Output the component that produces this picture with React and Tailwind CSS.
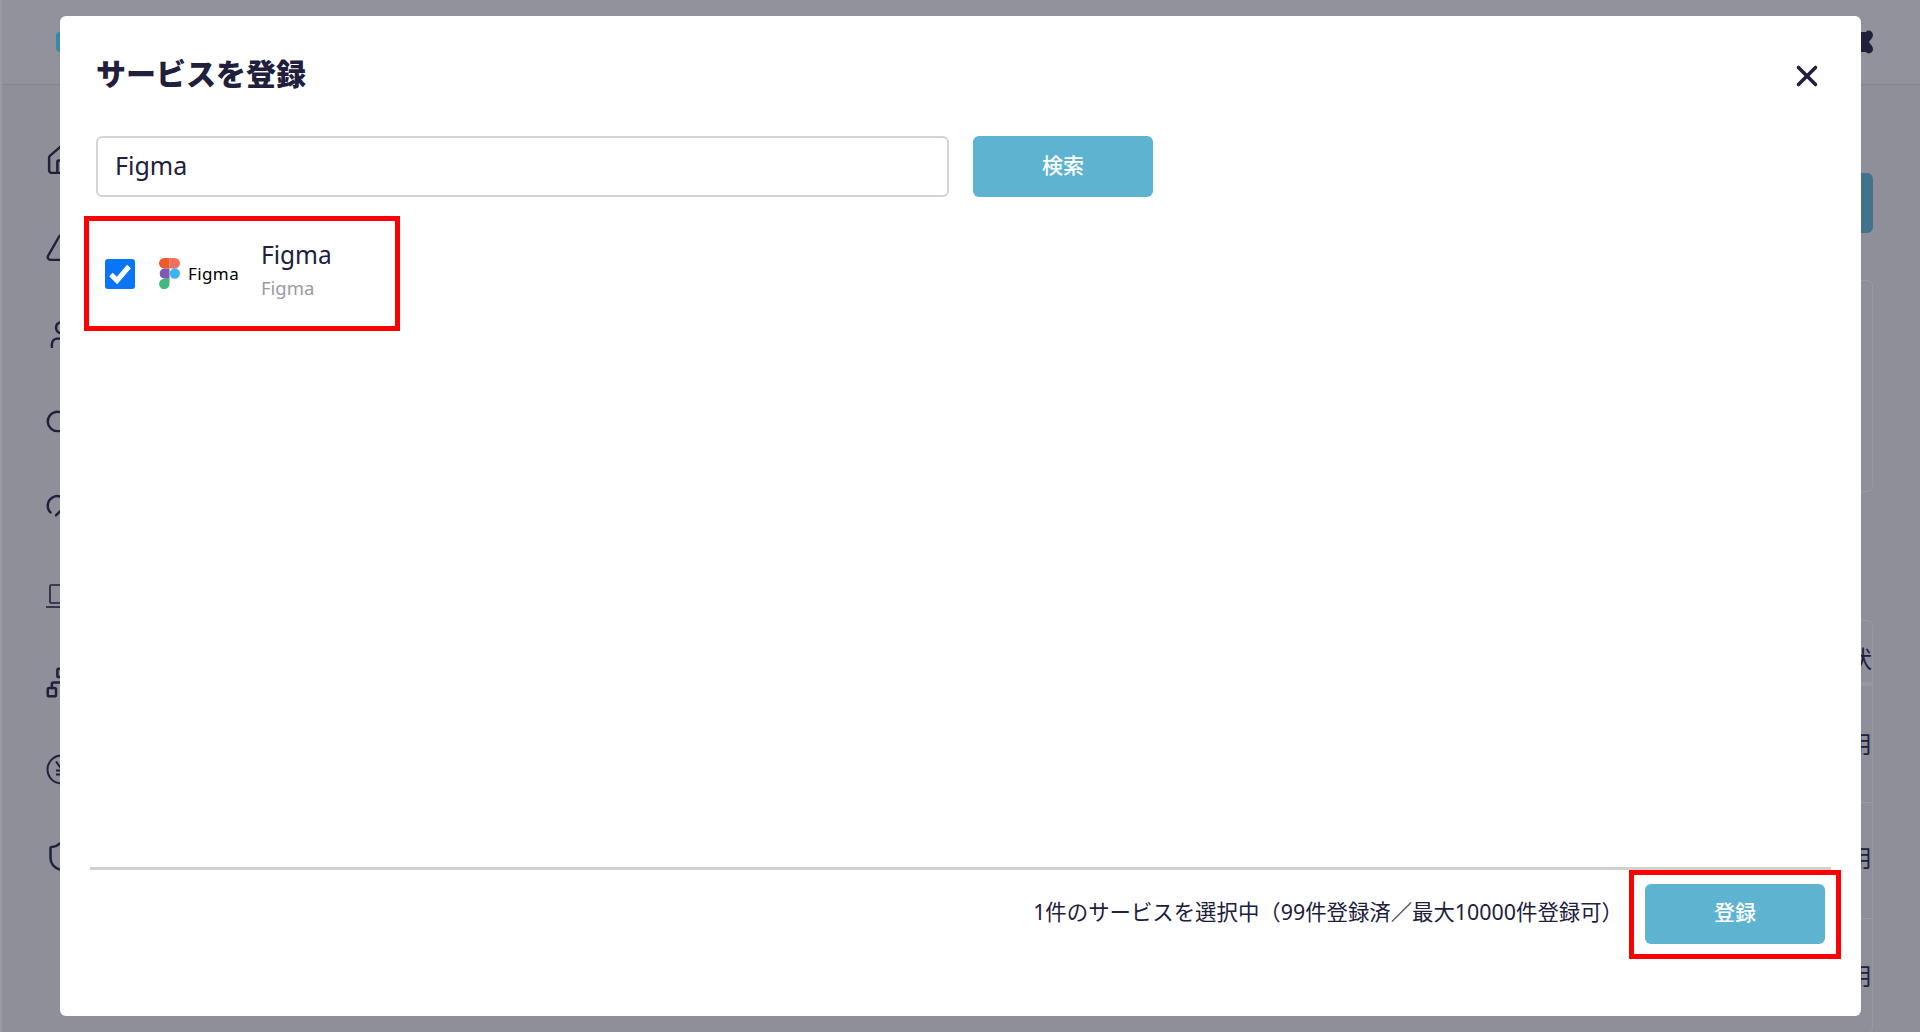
import React from "react";
import { Home, Triangle, User, Cloud, CloudUpload, Network, Shield, X } from "lucide-react";

const font = { fontFamily: '"Noto Sans","Noto Sans CJK JP",sans-serif' };

function Figma() {
  return (
    <svg width="21" height="31" viewBox="0 0 21 31" className="shrink-0">
      <path d="M5.2 0H10.5V10.4H5.2A5.2 5.2 0 0 1 5.2 0Z" fill="#ee5a2b" />
      <path d="M10.5 0H15.8A5.2 5.2 0 0 1 15.8 10.4H10.5Z" fill="#f0705f" />
      <path d="M5.2 10.4H10.5V20.7H5.2A5.2 5.2 0 0 1 5.2 10.4Z" fill="#7d5cb0" />
      <circle cx="15.8" cy="15.5" r="5.2" fill="#3cb5ee" />
      <path d="M5.2 20.7H10.5V25.8A5.2 5.2 0 1 1 5.2 20.7Z" fill="#3fb97c" />
    </svg>
  );
}

function LaptopIcon() {
  return (
    <svg width="33" height="33" viewBox="0 0 33 33" fill="none" stroke="currentColor" strokeWidth="1.6">
      <rect x="5" y="6" width="23" height="18" rx="1" />
      <path d="M1 28H32" />
    </svg>
  );
}

function YenIcon() {
  return (
    <svg width="33" height="33" viewBox="0 0 33 33" fill="none" stroke="currentColor" strokeWidth="2">
      <circle cx="16.5" cy="16.5" r="14" />
      <path d="M11 8.5L16.5 16L22 8.5M16.5 16V25M11 17.5H22M11 21.5H22" />
    </svg>
  );
}

function GearPiece() {
  return (
    <svg width="28" height="28" viewBox="0 0 28 28" fill="#20203c">
      <path d="M0 4H20C22 1 27 3 27 7C27 10 24 12 23 14C24 16 27 18 27 21C27 25 22 27 20 24H0Z" />
    </svg>
  );
}

function Stroke({ I }) {
  return <I size={33} strokeWidth={1.8} />;
}

const sideIcons = [
  <Stroke I={Home} />,
  <Stroke I={Triangle} />,
  <Stroke I={User} />,
  <Stroke I={Cloud} />,
  <Stroke I={CloudUpload} />,
  <LaptopIcon />,
  <Stroke I={Network} />,
  <YenIcon />,
  <Stroke I={Shield} />,
];

function Background() {
  return (
    <div className="w-[1920px] h-[1032px] bg-[#8f8f9a] flex flex-col text-[#20203c] border-l-2 border-[#9a9aa4]">
      <div className="h-[85px] shrink-0 flex items-center justify-between pl-[54px] pr-[46px] border-b border-[#85858f] bg-[#92929d]">
        <div className="w-[20px] h-[20px] rounded-sm bg-[#3a87ac]" />
        <GearPiece />
      </div>
      <div className="flex flex-1">
        <div className="w-[98px] shrink-0 flex flex-col gap-[54px] pl-[43px] pt-[59px]">
          {sideIcons.map((icon, i) => (
            <div key={i} className="h-[33px]">{icon}</div>
          ))}
        </div>
        <div className="flex-1 flex flex-col items-end pr-[47px] pt-[88px]">
          <div className="w-[180px] h-[60px] rounded-md bg-[#41738f]" />
          <div className="w-[1200px] h-[212px] mt-[47px] rounded-r-md border-y border-r border-[#979aa3]" />
          <div className="w-[1200px] mt-[128px] rounded-r-md border-t border-r border-[#979aa3] text-[24px]">
            <div className="h-[65px] flex items-center justify-end border-b-4 border-[#9696a0] pt-[14px]">現状</div>
            <div className="h-[117px] flex items-center justify-end border-b border-[#979aa3]">利用</div>
            <div className="h-[116px] flex items-center justify-end border-b border-[#979aa3] pb-[6px]">利用</div>
            <div className="h-[114px] flex items-center justify-end">利用</div>
          </div>
        </div>
      </div>
    </div>
  );
}

export default function App() {
  return (
    <div className="relative w-[1920px] h-[1032px] overflow-hidden" style={font}>
      <Background />
      <div className="absolute left-[60px] top-[16px] w-[1801px] h-[1000px] bg-white rounded-md flex flex-col text-[#20203c]">
        <div className="h-[120px] shrink-0 flex items-start justify-between pl-[36px] pr-[36px] pt-[38px]">
          <h1 className="text-[30px] leading-[40px] font-black">サービスを登録</h1>
          <X size={34} strokeWidth={2.5} className="mt-[5px] mr-[1px]" />
        </div>
        <div className="flex gap-[24px] pl-[36px] h-[61px] shrink-0">
          <div className="w-[853px] border-2 border-[#d4d4d8] rounded-md flex items-center pl-[17px] pb-[2px] text-[25px] text-[#20203c]">Figma</div>
          <button className="w-[180px] rounded-md bg-[#5eb3d1] text-white text-[21px] font-medium pb-[2px]">検索</button>
        </div>
        <div className="flex-1 pl-[24px] pt-[19px]">
          <div className="w-[316px] h-[115px] border-[5px] border-[#ff0000] flex items-center pl-[16px]">
            <div className="w-[30px] h-[30px] rounded-[3px] bg-[#0a76f6] flex items-center justify-center shrink-0">
              <svg width="24" height="22" viewBox="0 0 24 22" fill="none"><path d="M3 11.5L9 17.5L21 3.5" stroke="#fff" strokeWidth="5" /></svg>
            </div>
            <div className="ml-[24px] flex items-center gap-[8px] w-[102px] shrink-0">
              <Figma />
              <span className="text-[17px] font-normal text-black tracking-[0.4px]">Figma</span>
            </div>
            <div className="flex flex-col pb-[4px]">
              <span className="text-[24.5px] leading-[32px]">Figma</span>
              <span className="text-[18.5px] leading-[33px] text-[#9a9aa6]">Figma</span>
            </div>
          </div>
        </div>
        <div className="h-[3px] shrink-0 ml-[30px] mr-[30px] bg-[#d0d0d0]" />
        <div className="h-[146px] shrink-0 flex items-start justify-end pr-[36px] pt-[1px]">
          <div className="h-[60px] mt-[13px] flex items-center text-[21.4px] mr-[22px] pb-[3px]">1件のサービスを選択中（99件登録済／最大10000件登録可）</div>
          <div className="relative mt-[13px]">
            <button className="block w-[180px] h-[60px] rounded-md bg-[#5eb3d1] text-white text-[21px] font-medium pb-[2px]">登録</button>
            <div className="absolute left-[-16px] top-[-14px] w-[212px] h-[89px] border-[5px] border-[#ff0000]" />
          </div>
        </div>
      </div>
    </div>
  );
}
